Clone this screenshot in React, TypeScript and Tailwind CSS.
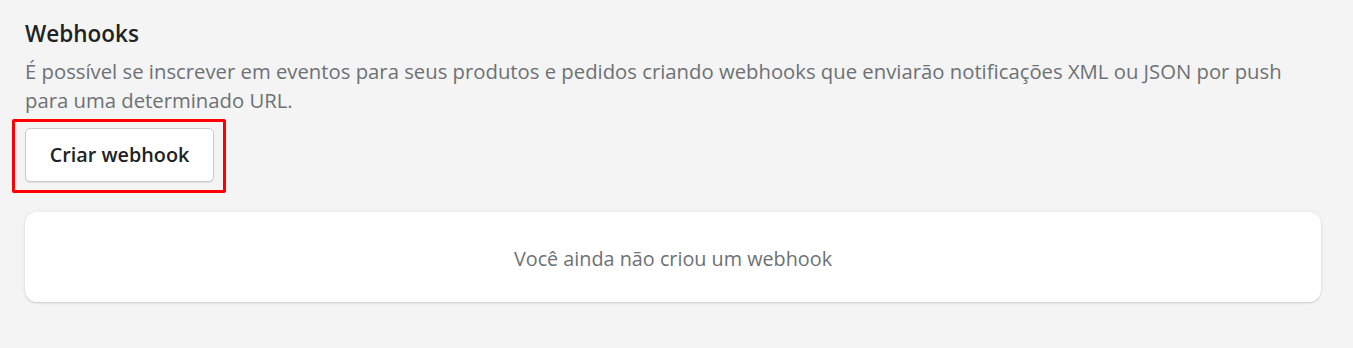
import React from 'react';

export default function App() {
  return (
    <div
      className="min-h-[348px] w-full bg-[#f4f4f4] px-[25px] pt-[19px] text-[#202223]"
      style={{ fontFamily: '"Open Sans", "Noto Sans", sans-serif' }}
    >
      {/* Section header */}
      <h2 className="text-[22.5px] font-semibold leading-[30px]">Webhooks</h2>
      <p className="mt-[8px] max-w-[1262px] text-[20.3px] leading-[29px] text-[#6d7175]">
        É possível se inscrever em eventos para seus produtos e pedidos criando webhooks que enviarão
        notificações XML ou JSON por push para uma determinado URL.
      </p>

      {/* Highlighted action */}
      <div className="-ml-[13px] mt-[4px] inline-block rounded-[2px] border-[3px] border-[#ff0000] pb-[8px] pl-[10px] pr-[9px] pt-[6px]">
        <button
          type="button"
          className="h-[54px] w-[189px] rounded-[5px] border border-[#c9cccf] bg-white text-[19.8px] font-semibold text-[#202223] shadow-[0_1px_0_rgba(0,0,0,0.08)]"
        >
          Criar webhook
        </button>
      </div>

      {/* Empty state card */}
      <div className="mt-[19px] flex h-[90px] w-[1296px] items-center justify-center rounded-[12px] bg-white pt-[3px] shadow-[0_0_5px_rgba(23,24,24,0.05),0_1px_2px_rgba(0,0,0,0.15)]">
        <span className="text-[19.8px] text-[#6d7175]">Você ainda não criou um webhook</span>
      </div>
    </div>
  );
}
